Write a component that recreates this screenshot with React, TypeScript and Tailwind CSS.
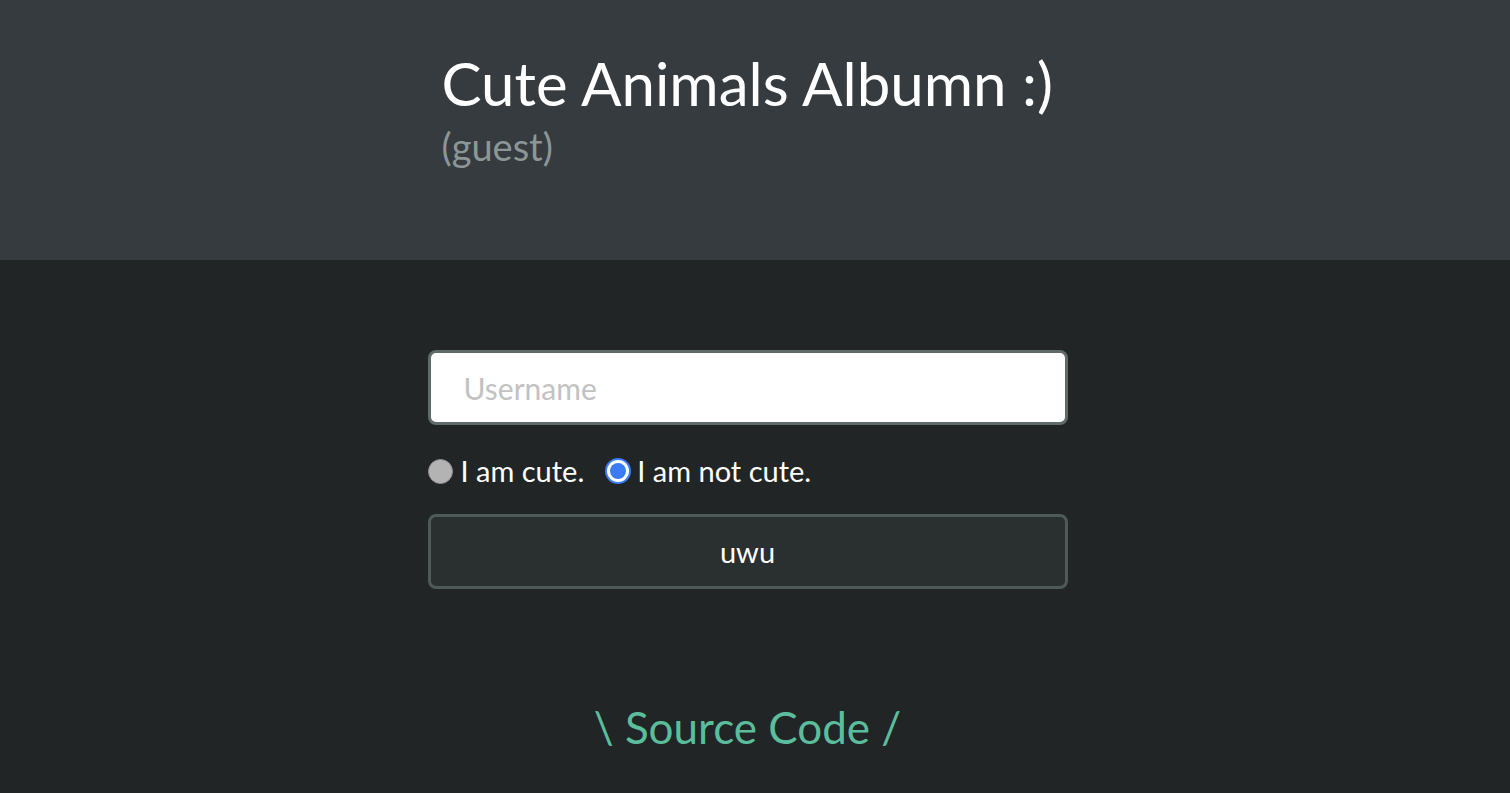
import React from "react";

export default function App() {
  const font = { fontFamily: "Lato, 'Noto Sans', sans-serif" };
  return (
    <div className="min-h-[793px] bg-[#212526] w-full" style={font}>
      <div className="h-[260px] bg-[#363b3f] pr-[15px]">
        <div className="mx-auto w-[640px] pl-[14px] pt-[47px]">
          <h1 className="text-[60px] leading-[72px] text-white font-normal whitespace-nowrap">Cute Animals Albumn :)</h1>
          <div className="text-[38px] leading-[44px] text-[#8c9696] mt-[5px]">(guest)</div>
        </div>
      </div>
      <div className="pr-[15px]">
        <div className="mx-auto w-[640px] pt-[90px] flex flex-col">
          <div className="h-[75px] rounded-[8px] border-[3px] border-[#5f6a6b] bg-white flex items-center pl-[33px]">
            <span className="text-[30px] text-[#c2c2c2] mt-[2px]">Username</span>
          </div>
          <div className="mt-[31px] flex items-center h-[30px] text-white text-[29px]">
            <span className="w-[25px] h-[25px] rounded-full bg-[#b3b3b3] border border-[#8f8f8f] inline-block"></span>
            <span className="ml-[8px]">I am cute.</span>
            <span className="ml-[21px] w-[26px] h-[26px] rounded-full bg-[#3b7cf4] p-[2px] inline-block">
              <span className="block w-full h-full rounded-full bg-white p-[3px]">
                <span className="block w-full h-full rounded-full bg-[#3b7cf4]"></span>
              </span>
            </span>
            <span className="ml-[6px]">I am not cute.</span>
          </div>
          <div className="mt-[28px] h-[75px] rounded-[8px] border-[3px] border-[#4f595a] bg-[#2a2f30] flex items-center justify-center text-white text-[29px]">
            uwu
          </div>
          <div className="mt-[105px] text-center text-[44px] text-[#5bbd9c]">\ Source Code /</div>
        </div>
      </div>
    </div>
  );
}
